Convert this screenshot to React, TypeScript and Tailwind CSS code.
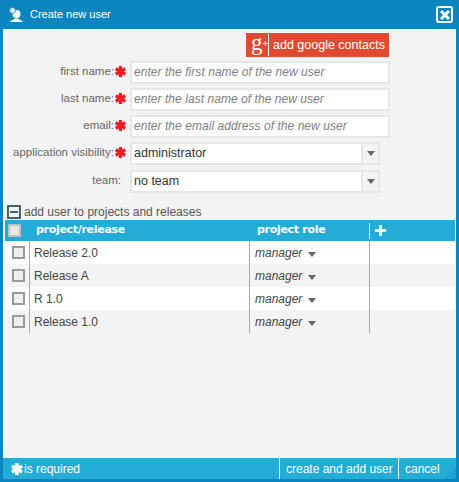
const FONT = "font-['Liberation_Sans',Arial,sans-serif]";

const rows = ["Release 2.0", "Release A", "R 1.0", "Release 1.0"];

function Asterisk({ className }: { className: string }) {
  return (
    <svg viewBox="0 0 12 12" className={className} fill="currentColor">
      <rect x="4.2" y="0" width="3.6" height="12" />
      <rect x="4.2" y="0" width="3.6" height="12" transform="rotate(60 6 6)" />
      <rect x="4.2" y="0" width="3.6" height="12" transform="rotate(120 6 6)" />
    </svg>
  );
}

function Arrow() {
  return (
    <svg viewBox="0 0 8 5" className="w-[8px] h-[5px]" fill="#666">
      <path d="M0 0h8L4 5z" />
    </svg>
  );
}

function FieldRow({ label, required, children }: { label: string; required?: boolean; children: React.ReactNode }) {
  return (
    <div className="flex items-center">
      <div className={`w-[123px] flex items-center justify-end text-[11.500px] text-[#666] ${FONT}`}>
        <span className={`-mt-[2px] ${required ? "" : "mr-[2px]"}`}>{label}</span>
        {required ? <Asterisk className="w-[11px] h-[11px] ml-[1px] -mt-[2px] text-[#f01c24]" /> : <span className="w-[3px]" />}
      </div>
      {children}
    </div>
  );
}

function TextField({ placeholder }: { placeholder: string }) {
  return (
    <div className={`ml-[4px] w-[260px] h-[23px] bg-white border-2 border-[#e6e6e6] flex items-center pl-[2px] pb-[1px] text-[12px] tracking-[0.05px] italic text-[#808080] ${FONT}`}>
      {placeholder}
    </div>
  );
}

function SelectField({ value }: { value: string }) {
  return (
    <div className={`ml-[4px] w-[250px] h-[23px] bg-white border-2 border-[#e6e6e6] flex items-center text-[12.500px] text-[#333] ${FONT}`}>
      <span className="flex-1 pl-[2px]">{value}</span>
      <div className="w-[17px] h-full bg-[#f3f3f3] border-l-2 border-[#e6e6e6] flex items-center justify-center">
        <Arrow />
      </div>
    </div>
  );
}

function Checkbox({ header }: { header?: boolean }) {
  return (
    <div className={`w-[13px] h-[13px] border-2 ${header ? "border-[#b8c4cc] bg-[#e8e8e8]" : "border-[#999] bg-[#efefef]"}`} />
  );
}

export default function App() {
  return (
    <div className="relative w-[459px] h-[482px] bg-[#0b85bf] flex flex-col px-[3px] pb-[3px]">
      {/* Title bar */}
      <div className="h-[29px] shrink-0 flex items-center justify-between pl-[5px] pr-[3px]">
        <div className="flex items-center">
          <svg viewBox="0 0 16 16" className="w-[16px] h-[16px]" fill="#fff">
            <circle cx="8.5" cy="7" r="4" />
            <path d="M2 15c1-2 4-2 4.5-3.5h4c.5 1.500 3.500 1.500 4.500 3.500z" />
            <circle cx="4.500" cy="3.500" r="3" fill="#dbeef7" stroke="#0b85bf" strokeWidth="0.8" />
          </svg>
          <span className={`ml-[6px] text-[11px] text-white ${FONT}`}>Create new user</span>
        </div>
        <div className="w-[17px] h-[17px] border-2 border-white rounded-[3px] flex items-center justify-center">
          <svg viewBox="0 0 10 10" className="w-[10px] h-[10px]" stroke="#fff" strokeWidth="3">
            <path d="M1 1l8 8M9 1l-8 8" />
          </svg>
        </div>
      </div>

      {/* Body */}
      <div className="flex-1 bg-[#f3f3f3] flex flex-col">
        <div className="pt-[4px] flex justify-end pr-[67px]">
          <div className={`w-[143px] h-[24px] bg-[#e04a32] flex items-center text-white ${FONT}`}>
            <span className="w-[22px] h-full pl-[5px] flex items-start text-[23px] leading-[19px] font-['Liberation_Serif',serif]">
              g<span className="text-[10px] font-bold leading-[22px]">+</span>
            </span>
            <span className="w-px h-[22px] bg-white" />
            <span className="ml-[4px] text-[12.500px]">add google contacts</span>
          </div>
        </div>

        <div className="mt-[4px] flex flex-col gap-[4px]">
          <FieldRow label="first name:" required>
            <TextField placeholder="enter the first name of the new user" />
          </FieldRow>
          <FieldRow label="last name:" required>
            <TextField placeholder="enter the last name of the new user" />
          </FieldRow>
          <FieldRow label="email:" required>
            <TextField placeholder="enter the email address of the new user" />
          </FieldRow>
          <FieldRow label="application visibility:" required>
            <SelectField value="administrator" />
          </FieldRow>
          <div className="mt-[1px]">
            <FieldRow label="team:">
              <SelectField value="no team" />
            </FieldRow>
          </div>
        </div>

        {/* Projects section */}
        <div className={`mt-[10px] h-[17px] ml-[4px] flex items-center text-[12px] text-[#555] ${FONT}`}>
          <div className="w-[14px] h-[14px] border-2 border-[#44606e] flex items-center justify-center">
            <div className="w-[8px] h-[2px] bg-[#44606e]" />
          </div>
          <span className="ml-[3px]">add user to projects and releases</span>
        </div>

        <div className="ml-[2px] mr-[1px]">
          <div className="h-[21px] bg-[#23acd6] flex items-center text-white text-[11px] tracking-[-0.3px] font-bold font-['DejaVu_Sans',sans-serif]">
            <div className="w-[25px] pl-[3px]"><Checkbox header /></div>
            <span className="w-[220px] pl-[6px]">project/release</span>
            <span className="w-[119px] pl-[7px]">project role</span>
            <div className="h-[16px] border-l border-white pl-[5px] flex items-center">
              <svg viewBox="0 0 11 11" className="w-[11px] h-[11px]" fill="#fff">
                <path d="M4 0h3v4h4v3H7v4H4V7H0V4h4z" />
              </svg>
            </div>
          </div>
          {rows.map((name, i) => (
            <div key={name} className={`h-[23px] flex items-center text-[12px] text-[#444] ${i % 2 ? "bg-[#f3f3f3]" : "bg-white"} ${FONT}`}>
              <div className="w-[25px] h-full flex items-center justify-center border-r border-[#aaa] pl-[2px]">
                <Checkbox />
              </div>
              <span className="w-[220px] h-full flex items-center pl-[4px] pt-[1px] border-r border-[#aaa]">{name}</span>
              <span className={`w-[120px] h-full flex items-center pl-[5px] pt-[1px] italic text-[12px] border-r border-[#aaa] ${FONT}`}>
                manager
                <span className="ml-[6px] mt-[2px]"><Arrow /></span>
              </span>
            </div>
          ))}
        </div>

        <div className="flex-1" />

        {/* Footer */}
        <div className={`h-[21px] bg-[#23acd6] flex items-center text-white text-[12px] ${FONT}`}>
          <div className="flex-1 flex items-center pl-[8px]">
            <Asterisk className="w-[12px] h-[12px]" />
            <span className="ml-[1px]">is required</span>
          </div>
          <span className="w-[119px] h-full flex items-center border-l border-white pl-[6px]">create and add user</span>
          <span className="w-[58px] h-full flex items-center border-l border-white pl-[6px]">cancel</span>
        </div>
      </div>

      {/* Resize grip */}
      <svg viewBox="0 0 10 10" className="absolute right-[3px] bottom-[3px] w-[10px] h-[10px]" stroke="#0b85bf" strokeWidth="1">
        <path d="M0 10L10 0M4 10L10 4M8 10L10 8" />
      </svg>
    </div>
  );
}
